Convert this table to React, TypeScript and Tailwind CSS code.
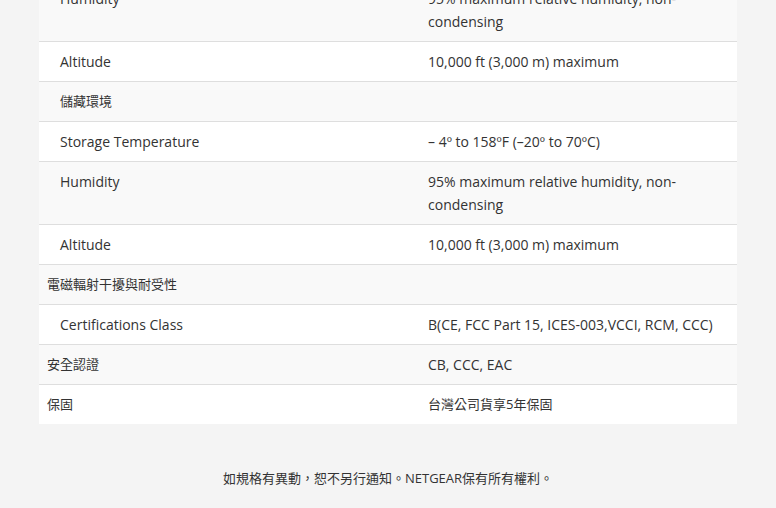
const rows: { label: string; value: string; sub?: boolean }[] = [
  { label: "Humidity", value: "95% maximum relative humidity, non-condensing", sub: true },
  { label: "Altitude", value: "10,000 ft (3,000 m) maximum", sub: true },
  { label: "儲藏環境", value: "", sub: true },
  { label: "Storage Temperature", value: "– 4º to 158ºF (–20º to 70ºC)", sub: true },
  { label: "Humidity", value: "95% maximum relative humidity, non-condensing", sub: true },
  { label: "Altitude", value: "10,000 ft (3,000 m) maximum", sub: true },
  { label: "電磁輻射干擾與耐受性", value: "" },
  { label: "Certifications Class", value: "B(CE, FCC Part 15, ICES-003,VCCI, RCM, CCC)", sub: true },
  { label: "安全認證", value: "CB, CCC, EAC" },
  { label: "保固", value: "台灣公司貨享5年保固" },
];

// CJK text is drawn a touch smaller than the latin text
const isCjk = (s: string) => /[\u4e00-\u9fff]/.test(s);

export default function App() {
  return (
    <main
      className="min-h-[508px] bg-[#f4f4f4] text-[#333] overflow-hidden"
      style={{ fontFamily: '"Open Sans", "Noto Sans CJK TC", sans-serif' }}
    >
      <div className="mx-[39px] -mt-[21px] w-[698px]">
        {rows.map((r, i) => (
          <div
            key={i}
            className={`flex leading-[23px] ${i % 2 === 0 ? "bg-[#f9f9f9]" : "bg-white"} ${i < rows.length - 1 ? "border-b border-[#dedede]" : ""}`}
          >
            <div className={`w-[381px] shrink-0 py-2 pr-2 ${r.sub ? "pl-[21px]" : "pl-2"} ${isCjk(r.label) ? "text-[13px]" : "text-[14px]"}`}>
              {r.label}
            </div>
            <div className={`flex-1 py-2 px-2 ${isCjk(r.value) ? "text-[13px]" : "text-[14px]"}`}>{r.value}</div>
          </div>
        ))}
      </div>
      <p className="text-center text-[13px] leading-[20px] mt-[44px] pb-[20px]">
        如規格有異動，恕不另行通知。NETGEAR保有所有權利。
      </p>
    </main>
  );
}
